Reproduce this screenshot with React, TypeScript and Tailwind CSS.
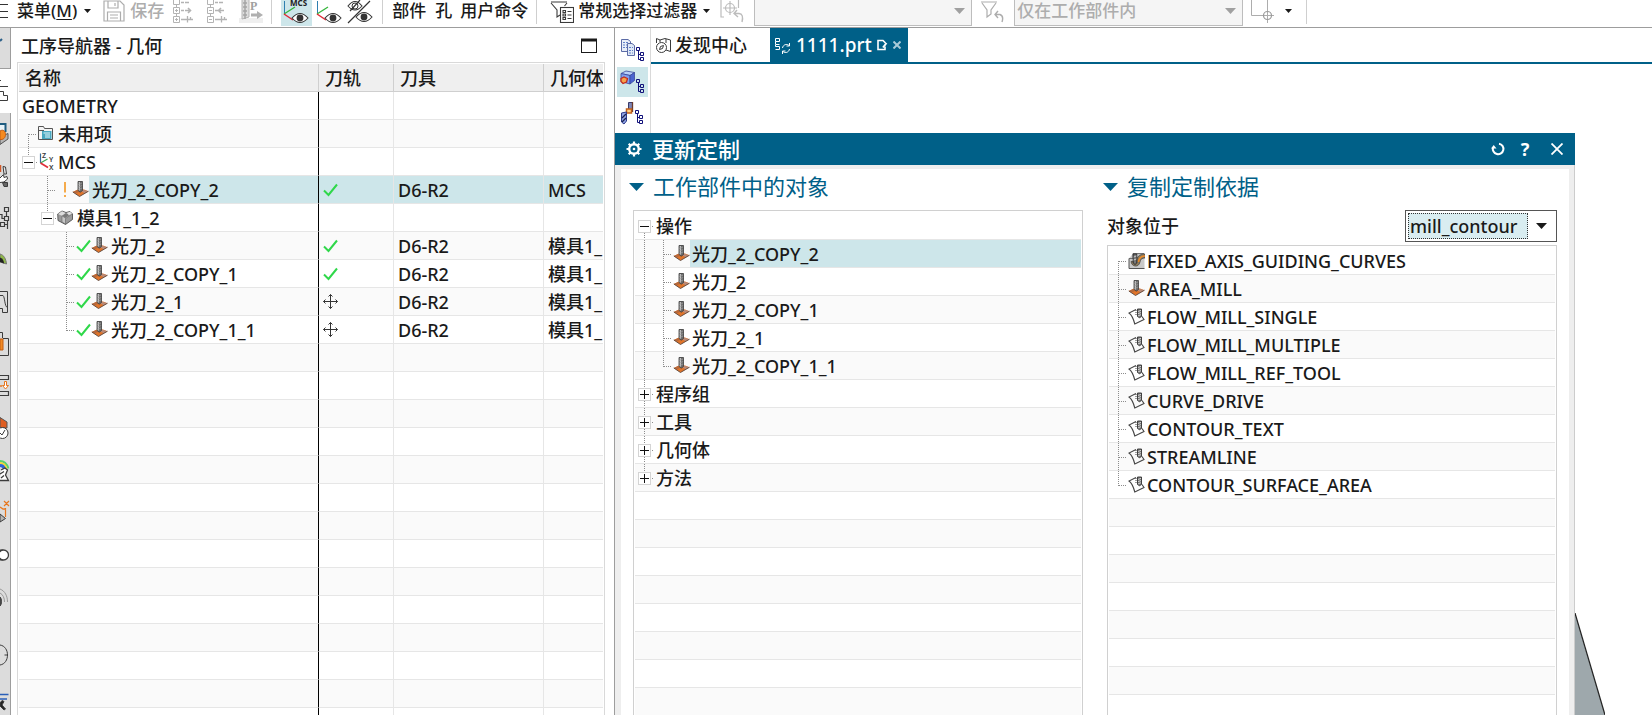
import React from "react";
import type { ReactNode } from "react";

/* ---------- tree connectors ---------- */

type GuideKind = "blank" | "line" | "tee" | "end" | "start" | "minus" | "plus";
type Join = "none" | "up" | "down" | "both";

function Guide({ kind, join = "none", label = "" }: { kind: GuideKind; join?: Join; label?: string }) {
  const dot = { stroke: "#8c8c8c", strokeDasharray: "1 1" };
  if (kind === "minus" || kind === "plus") {
    return (
      <button type="button" aria-label={label} className="block h-[27px] w-[19px] shrink-0">
        <svg viewBox="0 0 19 27" className="block h-[27px] w-[19px]" fill="none">
          {(join === "up" || join === "both") && <path d="M9.5 0V8" {...dot} />}
          {(join === "down" || join === "both") && <path d="M9.5 21V27" {...dot} />}
          <path d="M17 14.5H19" {...dot} />
          <rect x="3.5" y="8.5" width="12" height="12" fill="#fff" stroke="#d4d4d4" />
          <path d="M5 14.5H14" stroke="#111" />
          {kind === "plus" && <path d="M9.5 10V19" stroke="#111" />}
        </svg>
      </button>
    );
  }
  return (
    <svg viewBox="0 0 19 27" className="block h-[27px] w-[19px] shrink-0" fill="none">
      {(kind === "line" || kind === "tee") && <path d="M9.5 0V27" {...dot} />}
      {kind === "end" && <path d="M9.5 0V15" {...dot} />}
      {kind === "start" && <path d="M9.5 14V27" {...dot} />}
      {(kind === "tee" || kind === "end" || kind === "start") && <path d="M10 14.5H18" {...dot} />}
    </svg>
  );
}

/* ---------- item icons ---------- */

function MillIcon() {
  return (
    <svg viewBox="0 0 17 17" className="block size-[17px] shrink-0">
      <path d="M0.800 11L6 8.500H12L16.500 10.200L7.500 15.500Z" fill="#e0742a" />
      <path d="M10.500 8.600L16.500 10.200L12.500 12.300L9.500 10.500Z" fill="#b98a78" />
      <path d="M0.800 11L5 9L6.500 11L4 12.500Z" fill="#b5683c" />
      <path d="M0.800 11L7.500 15.500L16.500 10.200" fill="none" stroke="#5a463c" strokeWidth="0.900" />
      <path d="M6 0.500H10.500V9.500L8.200 11.200L6 9.500Z" fill="#6d6d6d" stroke="#3a3a3a" strokeWidth="0.800" />
      <path d="M7.300 1V9.500" stroke="#d9d9d9" strokeWidth="1" />
      <path d="M6.300 3.500L10.200 2M6.300 6L10.200 4.500M6.300 8.500L10.200 7" stroke="#9d9d9d" strokeWidth="0.700" />
    </svg>
  );
}

function FlowIcon() {
  return (
    <svg viewBox="0 0 17 17" className="block size-[17px] shrink-0" fill="none">
      <path d="M8 1.500L1 5C4.500 7.500 5.500 11 6.800 16L16 11.500L14 8.500" stroke="#444" strokeWidth="1.1" />
      <path d="M8 2V8" stroke="#444" strokeDasharray="1 1" />
      <path d="M9.500 1H13.500V8.500L11.500 9.700L9.500 8.500Z" fill="#777" stroke="#333" strokeWidth="0.9" />
      <path d="M10 3.500L13 2.300M10 5.700L13 4.500M10 7.900L13 6.700" stroke="#e5e5e5" strokeWidth="0.8" />
    </svg>
  );
}

function GuidingIcon() {
  return (
    <svg viewBox="0 0 17 17" className="block size-[17px] shrink-0">
      <path d="M1 6.5L5 1.5H16.5V16.5H1Z" fill="#c9c9c9" />
      <path d="M1 6.5V16.5H16.5" fill="none" stroke="#555" />
      <path d="M1 6.5H5V1.5H16" fill="none" stroke="#555" strokeWidth="0.8" />
      <path d="M3 9.5C3.5 15 11 16 12 10C12.5 7 14 6 17 6V2C11 2 9 5 8.5 9C8.3 11 7 11 7 9Z" fill="#8a7a5e" stroke="#333" strokeWidth="0.6" />
      <path d="M10.5 10C11 6 13 4 17 4" fill="none" stroke="#f08a24" strokeWidth="1.6" />
      <path d="M5.2 2H8.8V11L7 12.5L5.2 11Z" fill="#777" stroke="#222" strokeWidth="0.8" />
      <path d="M5.7 5L8.3 4M5.7 8L8.3 7" stroke="#ddd" strokeWidth="0.8" />
    </svg>
  );
}

function FolderIcon() {
  return (
    <svg viewBox="0 0 17 17" className="block size-[17px] shrink-0">
      <path d="M0.5 1.500H5.5L6.5 3.500H14.5V14.5H0.5Z" fill="#f4f4f4" stroke="#555" />
      <path d="M0.5 5.5H6" stroke="#555" />
      <rect x="4" y="6" width="9.5" height="8" fill="#49a7bf" />
      <path d="M5.5 8H12M7 10H12M7 12H12" stroke="#e6f6fa" />
    </svg>
  );
}

function AxesIcon() {
  return (
    <svg viewBox="0 0 17 17" className="block size-[17px] shrink-0" fill="none">
      <path d="M2.500 0.500V10" stroke="#356a9a" strokeWidth="1.200" />
      <path d="M2.500 10L9.500 6" stroke="#3aa655" strokeWidth="1.300" />
      <path d="M2.500 10L10 14.500" stroke="#e0303a" strokeWidth="1.700" />
      <g fill="#3a3a3a" fontFamily="Noto Sans" fontSize="7" fontWeight="600">
        <text x="4" y="5">Z</text>
        <text x="11" y="9">Y</text>
        <text x="11" y="17">X</text>
      </g>
    </svg>
  );
}

function PartIcon() {
  return (
    <svg viewBox="0 0 17 17" className="block size-[17px] shrink-0">
      <path d="M0.7 5L5 2L9 3.5L13 2.5L15.5 5V10.5L8.5 15.5L1 11.5Z" fill="#9b9b9b" stroke="#444" strokeWidth="0.8" />
      <path d="M1 5L5 2.3L8.5 4L5 6.8Z" fill="#ddd" />
      <path d="M5 6.8L8 8.7L12 6L15.2 5L8.5 9.5L8.5 15L5 13Z" fill="#c6c6c6" stroke="#555" strokeWidth="0.5" />
      <path d="M8.5 4.5L5.5 6.8L8.5 8.5L11 6.5V4Z" fill="#777" />
      <path d="M9.5 4L13 2.8L15.2 5L12 6Z" fill="#e2e2e2" />
    </svg>
  );
}

function CheckIcon() {
  return (
    <svg viewBox="0 0 15 17" className="block h-[17px] w-[15px] shrink-0" fill="none">
      <path d="M1 9.500L5.500 14L14 3.500" stroke="#2fd84a" strokeWidth="2" />
    </svg>
  );
}

function WarnIcon() {
  return (
    <svg viewBox="0 0 15 17" className="block h-[17px] w-[15px] shrink-0">
      <path d="M7 1H9V11.5H7ZM7 14H9V16H7Z" fill="#f5ab4c" />
    </svg>
  );
}

function MoveIcon() {
  return (
    <svg viewBox="0 0 15 17" className="block h-[17px] w-[15px] shrink-0" fill="none" stroke="#333">
      <path d="M7.5 1.5V15.5M0.5 8.5H14.5M5.5 3.5L7.5 1.5L9.5 3.5M5.5 13.5L7.5 15.5L9.5 13.5M2.5 6.5L0.5 8.5L2.5 10.5M12.5 6.5L14.5 8.5L12.5 10.5" />
    </svg>
  );
}

function Caret({ className }: { className: string }) {
  return (
    <svg viewBox="0 0 10 6" preserveAspectRatio="none" className={className} fill="currentColor">
      <path d="M0 0H10L5 6Z" />
    </svg>
  );
}

/* ---------- navigator panel ---------- */

type NavRow = {
  name: string;
  lead: ReactNode;
  path?: "check" | "move";
  tool?: string;
  geometry?: string;
  selected?: boolean;
};

const opLead = (last: boolean) => (
  <>
    <Guide kind="blank" />
    <Guide kind="blank" />
    <Guide kind={last ? "end" : "tee"} />
    <CheckIcon />
    <MillIcon />
  </>
);

const navRows: NavRow[] = [
  { name: "GEOMETRY", lead: null },
  { name: "未用项", lead: <><Guide kind="start" /><FolderIcon /></> },
  { name: "MCS", lead: <><Guide kind="minus" join="up" label="MCS" /><AxesIcon /></> },
  {
    name: "光刀_2_COPY_2",
    lead: <><Guide kind="blank" /><Guide kind="tee" /><WarnIcon /><MillIcon /></>,
    path: "check",
    tool: "D6-R2",
    geometry: "MCS",
    selected: true,
  },
  { name: "模具1_1_2", lead: <><Guide kind="blank" /><Guide kind="minus" join="up" label="模具1_1_2" /><PartIcon /></> },
  { name: "光刀_2", lead: opLead(false), path: "check", tool: "D6-R2", geometry: "模具1_" },
  { name: "光刀_2_COPY_1", lead: opLead(false), path: "check", tool: "D6-R2", geometry: "模具1_" },
  { name: "光刀_2_1", lead: opLead(false), path: "move", tool: "D6-R2", geometry: "模具1_" },
  { name: "光刀_2_COPY_1_1", lead: opLead(true), path: "move", tool: "D6-R2", geometry: "模具1_" },
];

const blanks = (count: number) => Array.from({ length: count }, (_, i) => i);

function Navigator() {
  return (
    <section className="flex w-[603px] shrink-0 flex-col overflow-hidden bg-white">
      <div className="flex h-[34px] shrink-0 items-center justify-between pt-[2px] pr-[17px] pl-[10px]">
        <h2 className="font-medium">工序导航器 - 几何</h2>
        <button type="button" aria-label="最大化">
          <svg viewBox="0 0 16 16" className="block size-4" fill="none">
            <rect x="0.5" y="1.5" width="15" height="13" stroke="#1a1a1a" />
            <path d="M0 2H16" stroke="#1a1a1a" strokeWidth="3" />
          </svg>
        </button>
      </div>
      <div className="mr-[9px] ml-[6px] min-h-0 flex-1 overflow-hidden border-x border-t border-[#d9d9d9] px-px pt-px">
        <table className="w-full table-fixed border-separate border-spacing-0 text-left">
          <thead>
            <tr className="h-7 bg-[#efefef]">
              <th className="h-7 w-[300px] border-r border-b border-[#cfcfcf] pt-[2px] pb-0 pl-[6px] leading-[25px] font-medium">名称</th>
              <th className="h-7 w-[75px] border-r border-b border-[#cfcfcf] pt-[2px] pb-0 pl-[6px] leading-[25px] font-medium">刀轨</th>
              <th className="h-7 w-[150px] border-r border-b border-[#cfcfcf] pt-[2px] pb-0 pl-[6px] leading-[25px] font-medium">刀具</th>
              <th className="h-7 overflow-hidden border-b border-[#cfcfcf] pt-[2px] pb-0 pl-[6px] leading-[25px] font-medium whitespace-nowrap">几何体</th>
            </tr>
          </thead>
          <tbody>
            {navRows.map((row) => (
              <tr key={row.name} className="h-7 even:bg-[#fafafa]">
                <td className="border-r border-b border-r-black border-b-[#e6e6e6] p-0">
                  <div className="flex h-[27px] items-center">
                    {row.lead}
                    <span className={row.selected ? "h-[27px] flex-1 bg-[#cde6ea] pl-[3px] leading-[29px]" : "h-[27px] flex-1 pl-[3px] leading-[29px]"}>{row.name}</span>
                  </div>
                </td>
                <td className={row.selected ? "border-r border-b border-[#e6e6e6] bg-[#cde6ea] p-0 pl-1" : "border-r border-b border-[#e6e6e6] p-0 pl-1"}>
                  {row.path === "check" && <CheckIcon />}
                  {row.path === "move" && <MoveIcon />}
                </td>
                <td className={row.selected ? "border-r border-b border-[#e6e6e6] bg-[#cde6ea] p-0 pl-1" : "border-r border-b border-[#e6e6e6] p-0 pl-1"}>
                  <div className="h-[27px] leading-[29px]">{row.tool}</div>
                </td>
                <td className={row.selected ? "border-b border-[#e6e6e6] bg-[#cde6ea] p-0 pl-1" : "border-b border-[#e6e6e6] p-0 pl-1"}>
                  <div className="h-[27px] overflow-hidden leading-[29px] whitespace-nowrap">{row.geometry}</div>
                </td>
              </tr>
            ))}
            {blanks(32).map((i) => (
              <tr key={i} className="h-7 even:bg-[#fafafa]">
                <td className="border-r border-b border-r-black border-b-[#e6e6e6]" />
                <td className="border-r border-b border-[#e6e6e6]" />
                <td className="border-r border-b border-[#e6e6e6]" />
                <td className="border-b border-[#e6e6e6]" />
              </tr>
            ))}
          </tbody>
        </table>
      </div>
    </section>
  );
}

/* ---------- resource bar on the left edge ---------- */

function RailIcon({ children }: { children: ReactNode }) {
  return (
    <svg viewBox="0 0 10 24" className="block h-6 w-[10px]" fill="none" stroke="#3c3c3c">
      {children}
    </svg>
  );
}

function RailItem({ label, children }: { label: string; children: ReactNode }) {
  return (
    <button type="button" aria-label={label} className="flex h-[42px] w-[11px] shrink-0 items-center border-r border-[#9d9d9d] bg-[#dcdcdc]">
      {children}
    </button>
  );
}

function Rail() {
  return (
    <nav className="flex w-[11px] shrink-0 flex-col overflow-hidden">
      <button type="button" aria-label="折叠" className="flex h-[41px] w-[11px] shrink-0 border-r border-b border-[#9d9d9d] bg-[#dcdcdc]">
        <RailIcon><path d="M0 13L2 11" stroke="#2b5f88" strokeWidth="2" /></RailIcon>
      </button>
      <button type="button" aria-label="工序导航器" className="flex h-[44px] w-[11px] shrink-0 items-center bg-white">
        <RailIcon><path d="M0 1.5H1M0 7.5H8M0 12.5H3.5V16.5H7.5V21.5H0" /></RailIcon>
      </button>
      <RailItem label="装配">
        <RailIcon>
          <path d="M0 15L8 11.500V17L0 22.500Z" fill="#b4b4b4" stroke="#555" />
          <path d="M0 1H6V9H0Z" fill="#e9f3f8" stroke="none" />
          <path d="M0 2H5.500V10" stroke="#1f5c80" strokeWidth="2" />
          <path d="M0 9C3 7 5.500 9 5.500 12.500S3 18 0 17.500Z" fill="#f58a1f" stroke="#c45d10" />
        </RailIcon>
      </RailItem>
      <RailItem label="约束">
        <RailIcon>
          <path d="M0.500 1V8" stroke="#d05a2a" strokeWidth="1.500" />
          <path d="M3 2.500L5.500 3L6.500 10L4 10Z" fill="#e6e6e6" />
          <path d="M0 14L3.500 10.500L4 13.500L7 12.500L7.500 15L4 18L0 18.500" fill="#fff" />
          <path d="M2.500 18.500H7.500V22.500H4Z" fill="#666" />
        </RailIcon>
      </RailItem>
      <RailItem label="部件">
        <RailIcon>
          <path d="M4.5 1.5H8.5V5.5H4.5ZM4.5 10.5H8.5V14.5H4.5ZM0.5 16.5H4.5V20.5H0.5ZM6.5 5V10M0 8.5H2V12.5H4M7.5 15V23M5 18.5H7" strokeWidth="1.200" />
        </RailIcon>
      </RailItem>
      <RailItem label="重用库">
        <RailIcon>
          <path d="M0 6C4 7 6 11 6.500 16L0 14Z" fill="#8fb84a" stroke="#777" />
          <path d="M0 9.500C3 10.500 4 13 4 15.500L0 14Z" fill="#222" stroke="none" />
        </RailIcon>
      </RailItem>
      <RailItem label="视图">
        <RailIcon><path d="M0 1.500H7.500V22.500H2.500V18.500H0M0 5.500H3C5 7 4.500 17 7.500 17.500" /></RailIcon>
      </RailItem>
      <RailItem label="模型">
        <RailIcon>
          <path d="M0 0.500H2.500V6M3 6.500H8.500V23.500H0" />
          <path d="M0 7H3V18H0Z" fill="#f08a24" stroke="#c45d10" />
        </RailIcon>
      </RailItem>
      <RailItem label="测量">
        <RailIcon>
          <path d="M0 1.500H8.500V5.500H0M0 17.500H8.500V21.500H0" strokeWidth="1.200" />
          <path d="M0 12H2" stroke="#e8761c" strokeWidth="1.500" />
          <path d="M4.500 7.500H6.500V11.500H8.500L5.500 15L2.500 11.500H4.500Z" fill="#fff" stroke="#e8761c" />
        </RailIcon>
      </RailItem>
      <RailItem label="检查">
        <RailIcon>
          <path d="M0 1.500L7 6V12H0Z" fill="#df5e22" stroke="#555" />
          <circle cx="2.500" cy="17" r="5.500" fill="#fff" />
          <path d="M0 17L2 19L5 14" />
        </RailIcon>
      </RailItem>
      <RailItem label="分析">
        <RailIcon>
          <path d="M0 3C4 3 7 6 8.500 10.500" stroke="#58d36a" strokeWidth="2" />
          <path d="M0 5C3 5 5.500 7.500 6.500 10.500" stroke="#f0d53a" strokeWidth="2" />
          <path d="M0 7.500C2 7.500 4 9 4.500 11.500" stroke="#2a62d8" strokeWidth="3" />
          <path d="M1 12L5 10L7.500 12L5.500 17L8.500 22.500H0M0 16L4 13.500M1 20L4 17.500" fill="#fff" strokeWidth="1.300" />
        </RailIcon>
      </RailItem>
      <RailItem label="尺寸">
        <RailIcon>
          <path d="M4 1L9 6M9 1L4 6M0 7L3 9L6 8.500M5.500 8V17" stroke="#e8761c" strokeWidth="1.200" />
          <path d="M0 14L5.500 18.500L0 22Z" fill="#b5b5b5" />
        </RailIcon>
      </RailItem>
      <RailItem label="选项">
        <RailIcon>
          <path d="M0 8H3V18H0" fill="#222" />
          <circle cx="3.500" cy="13" r="5" fill="#fff" strokeWidth="1.300" />
        </RailIcon>
      </RailItem>
      <button type="button" aria-label="信号" className="flex h-[50px] w-[11px] shrink-0 items-center border-r border-[#9d9d9d] bg-[#dcdcdc]">
        <RailIcon>
          <path d="M0 1C5 3 7.500 8 7.500 14M0 5C3 6.500 4.500 10 4.500 14" stroke="#9a9a9a" />
          <path d="M0 9C2 11 2 16 0 18Z" fill="#555" />
        </RailIcon>
      </button>
      <button type="button" aria-label="历史" className="flex h-[60px] w-[11px] shrink-0 items-center border-r border-[#9d9d9d] bg-[#dcdcdc]">
        <RailIcon><path d="M0 2C10 3.500 10 20.500 0 22M4.500 12H7.500" /></RailIcon>
      </button>
      <button type="button" aria-label="角色" className="flex w-[11px] flex-1 items-start border-r border-[#9d9d9d] bg-[#dcdcdc] pt-2">
        <RailIcon>
          <path d="M0 1.500H8.500M0 6H7" stroke="#2b5fb8" strokeWidth="1.500" />
          <path d="M4 8.500L2 12L5.500 16L4 17L0 13V10L2 7.500Z" fill="#222" />
        </RailIcon>
      </button>
    </nav>
  );
}

/* ---------- top toolbar ---------- */

function TreeToolIcon({ plus }: { plus: boolean }) {
  return (
    <svg viewBox="0 0 22 24" className="block h-6 w-[22px] shrink-0" fill="none" stroke="#b3b3b3">
      <path d="M0.5 0.5H6.5V5.500H0.5ZM0.5 8.500H6.5V14.500H0.5ZM0.5 17.5H6.5V23.5H0.5ZM3.500 6V8M3.500 15V17M2 11.500H5M2 20.500H5" />
      {plus && <path d="M3.500 10V13M3.500 19V22" />}
      <path d="M8 3.500H11M8 11.500H11M8 20.500H20M14.500 17V23.500M17.500 18V21" strokeWidth="1.300" />
      <path d={plus ? "M12 11.500H17M15 9L17.500 11.500L15 14M12 3.500H16" : "M17 11.500H12M14 9L11.500 11.500L14 14M12 3.500H16"} strokeWidth="1.600" />
    </svg>
  );
}

function EyeShape({ x, y }: { x: number; y: number }) {
  return (
    <g>
      <path d={`M${x} ${y}Q${x + 8} ${y - 9} ${x + 16} ${y}Q${x + 8} ${y + 9} ${x} ${y}Z`} fill="#fff" stroke="#333" strokeWidth="1.1" />
      <circle cx={x + 8} cy={y} r="3.4" fill="#333" />
    </g>
  );
}

function Separator({ className }: { className: string }) {
  return (
    <span className={className}>
      <span className="h-[26px] w-px bg-[#cfcfcf]" />
    </span>
  );
}

function Toolbar() {
  return (
    <header className="flex h-7 shrink-0 items-center overflow-hidden border-b border-[#9d9d9d] bg-white pb-[6px] text-[17px] leading-[21px] whitespace-nowrap">
      <svg viewBox="0 0 8 16" className="block h-4 w-2 shrink-0" stroke="#333" fill="none">
        <path d="M0 1.500H8M0 8.5H8M0 14.5H8" />
      </svg>
      <button type="button" className="ml-[9px] flex shrink-0 items-center gap-[7px]">
        <span>菜单(<u className="underline-offset-2">M</u>)</span>
        <Caret className="h-1 w-[7px]" />
      </button>
      <button type="button" disabled className="ml-3 flex shrink-0 items-center gap-[5px] text-[#adadad]">
        <svg viewBox="0 0 22 22" className="block size-[22px]" fill="none" stroke="#adadad" strokeWidth="1.2">
          <path d="M1 1H17L21 5V21H1Z" />
          <path d="M5 1V8H15V1M4.5 21V12H17.5V21M7 15H15M7 18H15M12 3V6" />
        </svg>
        保存
      </button>
      <button type="button" disabled aria-label="展开" className="ml-[9px]"><TreeToolIcon plus /></button>
      <button type="button" disabled aria-label="收起" className="ml-3"><TreeToolIcon plus={false} /></button>
      <button type="button" disabled aria-label="后处理" className="ml-[10px]">
        <svg viewBox="0 0 24 24" className="block size-6" fill="none">
          <path d="M0 19H24V24H0Z" fill="#efefef" />
          <path d="M1 0H3V20L10 18V0" fill="#ddd" stroke="#b5b5b5" />
          <path d="M6 0V20M4 4H8M4 8H8M4 12H8M4 16H8" stroke="#a5a5a5" strokeWidth="1.5" />
          <text x="11" y="11" fontFamily="Liberation Serif" fontSize="12" fontWeight="700" fill="#a0a0a0">P</text>
          <path d="M12 14.500H18V12L24 16L18 20V17.500H12Z" fill="#b0b0b0" />
        </svg>
      </button>
      <Separator className="ml-2 flex shrink-0" />
      <button type="button" aria-label="MCS" className="ml-[9px] flex h-[30px] w-[31px] shrink-0 items-end justify-center bg-[#cde6ea]">
        <svg viewBox="0 0 31 30" className="block h-[30px] w-[31px]" fill="none">
          <text x="9" y="10" fontSize="8" fontWeight="700" fill="#222" fontFamily="Noto Sans">MCS</text>
          <path d="M3.500 5V17" stroke="#2e7fb0" />
          <path d="M3 18L14 11" stroke="#33b53a" strokeWidth="1.300" />
          <path d="M3 18L12 24" stroke="#e02a35" strokeWidth="1.500" />
          <EyeShape x={11} y={22} />
        </svg>
      </button>
      <button type="button" aria-label="显示坐标系" className="ml-[2px]">
        <svg viewBox="0 0 31 30" className="block h-[30px] w-[31px]" fill="none">
          <path d="M3.500 5V17" stroke="#2e7fb0" />
          <path d="M3 18L14 11" stroke="#33b53a" strokeWidth="1.300" />
          <path d="M3 18L12 24" stroke="#e02a35" strokeWidth="1.500" />
          <EyeShape x={11} y={22} />
        </svg>
      </button>
      <button type="button" aria-label="显示隐藏" className="ml-[2px]">
        <svg viewBox="0 0 26 30" className="block h-[30px] w-[26px]" fill="none">
          <path d="M1 10Q8 1 15 10Q8 18 1 10Z" stroke="#333" strokeWidth="1.1" />
          <circle cx="8" cy="10" r="3" stroke="#333" />
          <path d="M3 15L13 4M1 27L23 5" stroke="#333" strokeWidth="1.200" />
          <EyeShape x={9} y={21} />
        </svg>
      </button>
      <Separator className="ml-[9px] flex shrink-0" />
      <button type="button" className="ml-[9px] shrink-0">部件</button>
      <button type="button" className="ml-[9px] shrink-0">孔</button>
      <button type="button" className="ml-2 shrink-0">用户命令</button>
      <Separator className="ml-2 flex shrink-0" />
      <button type="button" className="ml-[13px] flex shrink-0 items-center gap-1">
        <svg viewBox="0 0 24 24" className="block size-6" fill="none" stroke="#3a3a3a" strokeWidth="1.1">
          <path d="M1 3H17M1 4L7 11V18L10 16M17 4L14.500 7" />
          <rect x="10.500" y="8.500" width="13" height="15" fill="#fff" />
          <path d="M13 11.500H15.500V13.500H13ZM13 15H15.500V17H13ZM13 18.500H15.500V20.500H13ZM17.500 12.500H21.500M17.500 16H21.500M17.500 19.500H21.500" />
        </svg>
        常规选择过滤器
        <Caret className="ml-[2px] h-1 w-[7px]" />
      </button>
      <button type="button" disabled aria-label="重置选择" className="ml-[10px] shrink-0">
        <svg viewBox="0 0 24 26" className="block h-[26px] w-6" fill="none" stroke="#bcbcbc" strokeWidth="1.200">
          <path d="M4 19H1V0M18.500 0V10M10 3V17M3 10H17" />
          <circle cx="10" cy="10" r="4.500" />
          <path d="M17 12L14 15.500L18 19M14 15.500H19Q24 16 22 24" strokeWidth="1.400" />
        </svg>
      </button>
      <label className="ml-[10px] flex h-[30px] w-[218px] shrink-0 items-center border border-[#bdbdbd] bg-[#f5f5f5] pr-[6px]">
        <select disabled aria-label="类型" className="min-w-0 flex-1 appearance-none">
          <option></option>
        </select>
        <Caret className="h-[6px] w-[11px] text-[#a0a0a0]" />
      </label>
      <button type="button" disabled aria-label="重置过滤器" className="ml-[8px] shrink-0">
        <svg viewBox="0 0 24 24" className="block size-6" fill="none" stroke="#adadad" strokeWidth="1.200">
          <path d="M1 3H17M2 4L7 11V18L11 15V11L16 4" />
          <path d="M18 12L15 15.500L18 19M15 15.500H20Q24 17 22 23" strokeWidth="1.400" />
        </svg>
      </button>
      <label className="ml-[10px] flex h-[30px] w-[229px] shrink-0 items-center border border-[#bdbdbd] bg-[#f5f5f5] pr-[6px] pl-[2px]">
        <select disabled aria-label="范围" className="min-w-0 flex-1 appearance-none text-[#adadad]">
          <option>仅在工作部件内</option>
        </select>
        <Caret className="h-[6px] w-[11px] text-[#a0a0a0]" />
      </label>
      <button type="button" aria-label="捕捉点" className="ml-[7px] flex shrink-0 items-center gap-[11px]">
        <svg viewBox="0 0 24 26" className="block h-[26px] w-6" fill="none" stroke="#adadad">
          <path d="M1.500 0V17.500H24M17.500 0V25" />
          <circle cx="17.500" cy="17.500" r="4" stroke="#9a9a9a" strokeWidth="1.200" />
        </svg>
        <Caret className="h-1 w-[7px]" />
      </button>
      <Separator className="ml-[14px] flex shrink-0" />
    </header>
  );
}

/* ---------- view icons beside the canvas ---------- */

function TreeMark({ x, y }: { x: number; y: number }) {
  return (
    <g transform={`translate(${x} ${y})`} stroke="#10107a" fill="none">
      <path d="M0.500 0.500H3.500V3.500H0.500ZM2.500 4V12.500H4M2.500 7.500H4M4.500 5.500H7.500V8.500H4.500ZM4.500 10.500H7.500V13.500H4.500Z" />
    </g>
  );
}

function ViewBar() {
  return (
    <div className="flex w-9 shrink-0 flex-col gap-px border-r border-[#d9d9d9] bg-white pt-2 pl-[2px]">
      <button type="button" aria-label="程序顺序视图" className="h-[30px] w-[31px]">
        <svg viewBox="0 0 31 30" className="block h-[30px] w-[31px]">
          <path d="M4.500 3.500H11L13.500 5.500V15.500H4.500Z" fill="#e8eef8" stroke="#5b6ba6" />
          <path d="M6 6.500H12M6 9H12M6 11.500H12" stroke="#5f80c8" strokeDasharray="2 1" />
          <path d="M10.500 7.500H15L17.500 9.500V19.500H10.500Z" fill="#dfe8f6" stroke="#5b6ba6" />
          <path d="M12 11.500H16M12 14.500H16M12 17H16" stroke="#5f80c8" strokeDasharray="2 1" />
          <TreeMark x={19} y={11} />
        </svg>
      </button>
      <button type="button" aria-label="几何视图" className="h-[30px] w-[31px] bg-[#cde6ea]">
        <svg viewBox="0 0 31 30" className="block h-[30px] w-[31px]">
          <path d="M4 6.500L9 4L17.500 5.500L13 8.500Z" fill="#b8d0fa" stroke="#39479a" strokeWidth="0.800" />
          <path d="M4 6.500L13 8.500V17L4 14.500Z" fill="#7f9ff0" stroke="#39479a" strokeWidth="0.800" />
          <path d="M13 8.500L17.500 5.500V13.500L13 17Z" fill="#4a63cf" stroke="#39479a" strokeWidth="0.800" />
          <path d="M4 11.500L7 10L10.500 11.500L9.500 15L6 16.500L4 14.500Z" fill="#f6a34a" stroke="#c22c20" strokeWidth="1.300" />
          <TreeMark x={19} y={12} />
        </svg>
      </button>
      <button type="button" aria-label="加工方法视图" className="h-[30px] w-[31px]">
        <svg viewBox="0 0 31 30" className="block h-[30px] w-[31px]">
          <path d="M11.500 4.500H15.500V13H11.500Z" fill="#7c86b8" stroke="#3a3a6a" />
          <path d="M15.500 4V14" stroke="#6a3a2a" strokeWidth="1.300" />
          <path d="M9.500 11H14.500V15H9.500Z" fill="#ffd28a" stroke="#c2601a" strokeWidth="1.500" />
          <path d="M4.500 15L9.500 14V23L7 26L4.500 24Z" fill="#8fa3e6" stroke="#2c3a8a" />
          <path d="M5 20L9 16M5 24L9 20" stroke="#1c2450" strokeWidth="1.300" />
          <TreeMark x={18} y={12} />
        </svg>
      </button>
    </div>
  );
}

/* ---------- document tabs ---------- */

function Tabs() {
  return (
    <div className="flex h-9 shrink-0 items-stretch border-b-2 border-[#006088] bg-white">
      <button type="button" className="flex w-[119px] shrink-0 items-center gap-[3px] pl-1">
        <svg viewBox="0 0 17 17" className="block size-[17px]" fill="none" stroke="#3a3a3a">
          <path d="M1.500 6V1.500L5 3L10 1.500L15.500 3V14.500L11 13M11 2V6M5 3V5" />
          <circle cx="6.500" cy="10.500" r="5" />
          <path d="M4.500 12.500L5.500 9.500L8.500 8.500L7.500 11.500Z" />
        </svg>
        <span>发现中心</span>
      </button>
      <div className="flex w-[138px] shrink-0 items-center bg-[#006088] pl-[5px] text-white">
        <svg viewBox="0 0 17 17" className="block size-[17px]" fill="none" stroke="#fff">
          <path d="M0.500 1.500H4.500V4.500H0.500ZM4.500 7.500H0.500V9.500H4.500V12.500H0.500M0.500 4.500V7" />
          <path d="M7.500 11C8 7.500 12 6.500 14 8.500M14.500 6V9H11.500M14.500 12C14 15.500 10 16.500 8 14.500M7.500 17V14H10.500" />
        </svg>
        <button type="button" className="ml-[4px] text-[19px]">1111.prt</button>
        <svg viewBox="0 0 11 12" className="ml-[5px] block h-3 w-[11px]" fill="none" stroke="#fff">
          <path d="M8 7.500V10.500H1V1.500H6L8.500 4" strokeWidth="1.600" />
          <path d="M9.500 4L6 8.500" strokeWidth="2" />
        </svg>
        <button type="button" aria-label="关闭" className="ml-[5px]">
          <svg viewBox="0 0 8 8" className="block size-2" stroke="#a9cad8" strokeWidth="2">
            <path d="M0.500 0.500L7.500 7.500M7.500 0.500L0.500 7.500" />
          </svg>
        </button>
      </div>
    </div>
  );
}

/* ---------- dialog ---------- */

type ListRow = { name: string; lead: ReactNode; selected?: boolean };

const childLead = (last: boolean) => (
  <>
    <Guide kind="line" />
    <Guide kind={last ? "end" : "tee"} />
    <MillIcon />
  </>
);

const objectRows: ListRow[] = [
  { name: "操作", lead: <Guide kind="minus" join="down" label="操作" /> },
  { name: "光刀_2_COPY_2", lead: childLead(false), selected: true },
  { name: "光刀_2", lead: childLead(false) },
  { name: "光刀_2_COPY_1", lead: childLead(false) },
  { name: "光刀_2_1", lead: childLead(false) },
  { name: "光刀_2_COPY_1_1", lead: childLead(true) },
  { name: "程序组", lead: <Guide kind="plus" join="both" label="程序组" /> },
  { name: "工具", lead: <Guide kind="plus" join="both" label="工具" /> },
  { name: "几何体", lead: <Guide kind="plus" join="both" label="几何体" /> },
  { name: "方法", lead: <Guide kind="plus" join="up" label="方法" /> },
];

const templateRows: ListRow[] = [
  { name: "FIXED_AXIS_GUIDING_CURVES", lead: <><Guide kind="start" /><GuidingIcon /></> },
  { name: "AREA_MILL", lead: <><Guide kind="tee" /><MillIcon /></> },
  { name: "FLOW_MILL_SINGLE", lead: <><Guide kind="tee" /><FlowIcon /></> },
  { name: "FLOW_MILL_MULTIPLE", lead: <><Guide kind="tee" /><FlowIcon /></> },
  { name: "FLOW_MILL_REF_TOOL", lead: <><Guide kind="tee" /><FlowIcon /></> },
  { name: "CURVE_DRIVE", lead: <><Guide kind="tee" /><FlowIcon /></> },
  { name: "CONTOUR_TEXT", lead: <><Guide kind="tee" /><FlowIcon /></> },
  { name: "STREAMLINE", lead: <><Guide kind="tee" /><FlowIcon /></> },
  { name: "CONTOUR_SURFACE_AREA", lead: <><Guide kind="end" /><FlowIcon /></> },
];

function TreeList({ rows }: { rows: ListRow[] }) {
  return (
    <ul className="min-h-0 flex-1 overflow-hidden border-x border-t border-[#d0d0d0] px-px pt-px">
      {rows.map((row) => (
        <li key={row.name} className="flex h-7 items-center border-b border-[#e6e6e6] even:bg-[#fafafa]">
          {row.lead}
          <span className={row.selected ? "h-[27px] flex-1 bg-[#cde6ea] pl-[2px] leading-[29px]" : "h-[27px] flex-1 pl-[2px] leading-[29px]"}>{row.name}</span>
        </li>
      ))}
      {blanks(32).map((i) => (
        <li key={i} className="h-7 border-b border-[#e6e6e6] even:bg-[#fafafa]" />
      ))}
    </ul>
  );
}

function SectionTitle({ children }: { children: ReactNode }) {
  return (
    <h3 className="flex h-[41px] shrink-0 items-center gap-[9px] pb-[6px] text-[22px] font-normal text-[#006088]">
      <Caret className="h-2 w-[15px]" />
      {children}
    </h3>
  );
}

function Dialog() {
  return (
    <div role="dialog" aria-labelledby="dialog-title" className="absolute top-[105px] bottom-0 left-0 flex w-[960px] flex-col">
      <div className="flex h-8 shrink-0 items-center bg-[#006088] pr-3 pl-[11px] text-white">
        <svg viewBox="0 0 16 16" className="block size-4" fill="none" stroke="#fff">
          <circle cx="8" cy="8" r="4.800" strokeWidth="2.400" />
          <circle cx="8" cy="8" r="1.300" fill="#fff" stroke="none" />
          <path d="M8 0.500V3M8 13V15.500M0.500 8H3M13 8H15.500M2.700 2.700L4.500 4.500M11.500 11.500L13.300 13.300M2.700 13.300L4.500 11.500M11.500 4.500L13.300 2.700" strokeWidth="2.200" />
        </svg>
        <h2 id="dialog-title" className="ml-[10px] flex-1 text-[22px]">更新定制</h2>
        <button type="button" aria-label="重置">
          <svg viewBox="0 0 14 14" className="block size-[14px]" fill="none" stroke="#fff">
            <path d="M8 1.700A5.300 5.300 0 1 1 2 5.500" strokeWidth="2" />
            <path d="M0 6.500L2.700 3L5.500 6.500Z" fill="#fff" stroke="none" />
          </svg>
        </button>
        <button type="button" className="ml-[14px] w-3 text-[18px] font-bold">?</button>
        <button type="button" aria-label="关闭" className="ml-5">
          <svg viewBox="0 0 12 12" className="block size-3" stroke="#fff" strokeWidth="1.800">
            <path d="M0.500 0.500L11.500 11.500M11.500 0.500L0.500 11.500" />
          </svg>
        </button>
      </div>
      <div className="min-h-0 flex-1 border-r border-[#cccccc] bg-[#eeeeee] pt-1 pr-[5px] pl-[6px]">
        <div className="grid h-full grid-cols-2 gap-6 overflow-hidden bg-white px-3">
          <section className="flex min-h-0 flex-col">
            <div className="-ml-1 flex flex-col"><SectionTitle>工作部件中的对象</SectionTitle></div>
            <TreeList rows={objectRows} />
          </section>
          <section className="flex min-h-0 flex-col">
            <div className="-ml-1 flex flex-col"><SectionTitle>复制定制依据</SectionTitle></div>
            <div className="mb-[3px] flex h-8 shrink-0 items-center justify-between">
              <label htmlFor="template" className="pt-px">对象位于</label>
              <div className="flex h-8 w-[152px] items-center border border-[#555] bg-white p-[2px]">
                <select id="template" className="h-[26px] w-[120px] appearance-none border border-dotted border-[#333] bg-[#d9edf1] pl-px leading-6 outline-none">
                  <option>mill_contour</option>
                </select>
                <span className="flex flex-1 justify-center"><Caret className="h-[6px] w-[11px]" /></span>
              </div>
            </div>
            <TreeList rows={templateRows} />
          </section>
        </div>
      </div>
    </div>
  );
}

/* ---------- page ---------- */

export default function App() {
  return (
    <div className="flex h-screen flex-col overflow-hidden bg-white font-['Noto_Sans','Noto_Sans_CJK_SC',sans-serif] text-[18px] leading-[27px] font-medium text-[#1a1a1a]">
      <Toolbar />
      <div className="flex min-h-0 flex-1">
        <Rail />
        <Navigator />
        <main className="relative flex min-w-0 flex-1 border-l border-[#9d9d9d]">
          <ViewBar />
          <div className="flex min-w-0 flex-1 flex-col">
            <Tabs />
            <div className="flex min-h-0 flex-1 items-end pl-[924px]">
              <svg viewBox="0 0 30 102" className="block h-[102px] w-[30px] shrink-0">
                <path d="M0 0L30 102H0Z" fill="#9ea8ac" />
                <path d="M0 0L30 102" stroke="#222" strokeWidth="1.200" />
              </svg>
            </div>
          </div>
          <Dialog />
        </main>
      </div>
    </div>
  );
}
